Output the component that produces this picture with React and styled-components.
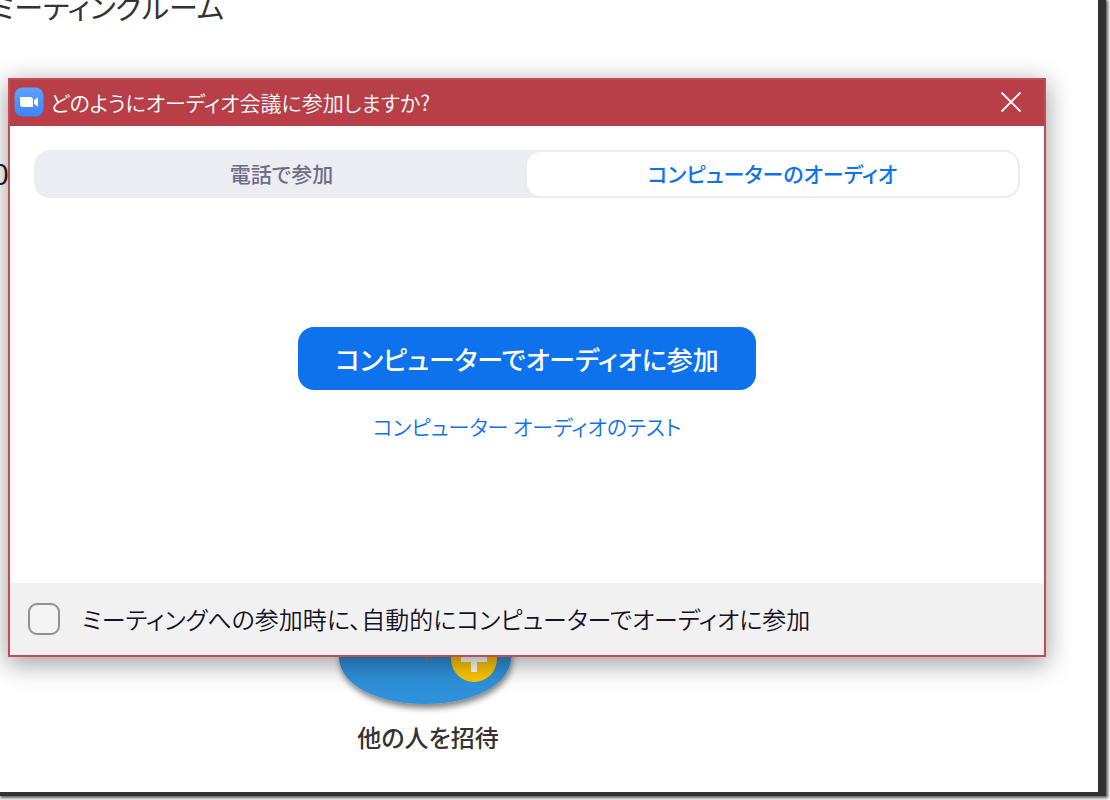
import React, { useState } from 'react'
import styled, { createGlobalStyle } from 'styled-components'

const GlobalStyle = createGlobalStyle`
* { box-sizing: border-box; }
body {
  margin: 0;
  overflow: hidden;
  font-family: "Noto Sans CJK JP", sans-serif;
  font-feature-settings: "palt";
}
button, input {
  font-family: inherit;
  font-feature-settings: inherit;
}
`
const Screen = styled.div`
  position: relative;
  display: flex;
  height: 100vh;
  padding: 0 4px 4px 0;
  overflow: hidden;
  background: #fff;
`
const HomeWindow = styled.main`
  flex: 1;
  display: flex;
  flex-direction: column;
  overflow: hidden;
  background: #fff;
  border-right: 8px solid #323232;
  border-bottom: 4px solid #323232;
  box-shadow: 1px 1px 3px 1px #555;
`
const RoomName = styled.h1`
  display: flex;
  justify-content: flex-end;
  width: 224px;
  height: 24px;
  margin: 0;
  align-items: flex-end;
  white-space: nowrap;
  font-size: 29px;
  font-weight: 400;
  line-height: 36px;
  color: #333;
`
const RoomNumber = styled.p`
  display: flex;
  justify-content: flex-end;
  width: 9px;
  margin: 130px 0 0;
  font-family: "Open Sans", sans-serif;
  font-size: 30px;
  line-height: 40px;
  color: #222;
`
const Invite = styled.div`
  display: flex;
  flex-direction: column;
  align-items: center;
  width: 188px;
  margin: auto 0 35px 334px;
`
const InviteLabel = styled.span`
  font-size: 24px;
  font-weight: 500;
  line-height: 40px;
  color: #333;
`
const Dialog = styled.section`
  position: absolute;
  top: 78px;
  left: 8px;
  right: 64px;
  display: flex;
  flex-direction: column;
  background: #fff;
  border: 2px solid #bf4e56;
  box-shadow: 0 6px 24px 1px rgba(0, 0, 0, 0.38);
`
const TitleBar = styled.header`
  display: flex;
  align-items: center;
  gap: 6px;
  height: 46px;
  padding: 0 20px 2px 4px;
  background: #b83f47;
`
const Title = styled.h2`
  flex: 1;
  margin: 0;
  font-size: 21px;
  font-weight: 350;
  line-height: 32px;
  color: #fff;
`
const CloseButton = styled.button`
  display: flex;
  padding: 0;
  border: 0;
  background: none;
  cursor: pointer;
`
const Tabs = styled.div`
  display: flex;
  height: 48px;
  margin: 24px;
  padding: 2px;
  border-radius: 16px;
  background: #ecedf3;
`
const Tab = styled.button`
  flex: 1;
  padding: 0 0 2px;
  border: 0;
  border-radius: 14px;
  background: ${({ $active }) => ($active ? '#fff' : 'transparent')};
  color: ${({ $active }) => ($active ? '#0e72ed' : '#6e6d88')};
  font-size: 21px;
  font-weight: 500;
  line-height: 32px;
  cursor: pointer;
`
const Content = styled.div`
  display: flex;
  flex-direction: column;
  align-items: center;
  gap: 18px;
  padding: 105px 0 139px;
`
const JoinButton = styled.button`
  width: 458px;
  height: 63px;
  padding: 0;
  border: 0;
  border-radius: 16px;
  background: #0e72ed;
  color: #fff;
  font-size: 26px;
  font-weight: 500;
  line-height: 40px;
  cursor: pointer;
`
const TestLink = styled.a`
  font-size: 21px;
  font-weight: 350;
  line-height: 36px;
  color: #0e72ed;
  text-decoration: none;
`
const Footer = styled.footer`
  display: flex;
  align-items: center;
  height: 72px;
  padding: 0 18px;
  background: #f1f1f1;
`
const AutoJoin = styled.label`
  display: flex;
  align-items: center;
  gap: 22px;
  font-size: 24px;
  font-weight: 350;
  line-height: 36px;
  color: #131325;
  cursor: pointer;
`
const Checkbox = styled.input`
  appearance: none;
  width: 32px;
  height: 32px;
  margin: 0;
  border: 2px solid #909096;
  border-radius: 9px;
  background: ${({ checked }) => (checked ? '#0e72ed' : '#f4f4f4')};
`

function ZoomLogo() {
  return (
    <svg width="30" height="30" viewBox="0 0 30 30" aria-hidden="true">
      <defs>
        <linearGradient id="logo" x1="0" y1="0" x2="0" y2="1">
          <stop offset="0" stopColor="#5ba3fb" />
          <stop offset="1" stopColor="#3d84fa" />
        </linearGradient>
      </defs>
      <rect x="0.5" y="0.5" width="29" height="29" rx="8" fill="url(#logo)" />
      <path d="M6 10h10q3 0 3 3v7H9q-3 0-3-3z" fill="#fff" />
      <path d="M20 13.3l3.2-2.5q.8-.5.8.4v7.6q0 .9-.8.4L20 16.700z" fill="#fff" />
    </svg>
  )
}

function InviteIcon() {
  return (
    <svg width="188" height="84" viewBox="0 0 188 84" aria-hidden="true">
      <defs>
        <filter id="shadow" x="-10%" y="-10%" width="120%" height="130%">
          <feDropShadow dx="1" dy="4" stdDeviation="3" floodOpacity="0.5" />
        </filter>
      </defs>
      <path
        d="M5 0V24C5 53 46 71 91 71S177 53 177 24V0z"
        fill="#2d91da"
        filter="url(#shadow)"
      />
      <path d="M91 18h3l-1.500 11z" fill="#c87e2c" />
      <circle cx="140" cy="26" r="23" fill="#fdc700" />
      <path d="M137 13h6v10h10v6h-10v10h-6v-10h-10v-6h10z" fill="#fff" />
    </svg>
  )
}

function App() {
  const [tab, setTab] = useState('computer')
  const [autoJoin, setAutoJoin] = useState(false)

  return (
    <Screen>
      <GlobalStyle />
      <HomeWindow>
        <RoomName>ルミーティングルーム</RoomName>
        <RoomNumber>0</RoomNumber>
        <Invite>
          <InviteIcon />
          <InviteLabel>他の人を招待</InviteLabel>
        </Invite>
      </HomeWindow>
      <Dialog role="dialog" aria-labelledby="dialog-title">
        <TitleBar>
          <ZoomLogo />
          <Title id="dialog-title">どのようにオーディオ会議に参加しますか?</Title>
          <CloseButton aria-label="閉じる">
            <svg width="26" height="26" viewBox="0 0 26 26" stroke="#fff" strokeWidth="1.800">
              <path d="M3.500 3.500l19 19M22.500 3.500l-19 19" />
            </svg>
          </CloseButton>
        </TitleBar>
        <Tabs role="tablist">
          <Tab role="tab" aria-selected={tab === 'phone'} $active={tab === 'phone'} onClick={() => setTab('phone')}>
            電話で参加
          </Tab>
          <Tab role="tab" aria-selected={tab === 'computer'} $active={tab === 'computer'} onClick={() => setTab('computer')}>
            コンピューターのオーディオ
          </Tab>
        </Tabs>
        <Content>
          <JoinButton>コンピューターでオーディオに参加</JoinButton>
          <TestLink href="#test">コンピューター オーディオのテスト</TestLink>
        </Content>
        <Footer>
          <AutoJoin htmlFor="auto-join">
            <Checkbox
              id="auto-join"
              type="checkbox"
              checked={autoJoin}
              onChange={(e) => setAutoJoin(e.target.checked)}
            />
            ミーティングへの参加時に、自動的にコンピューターでオーディオに参加
          </AutoJoin>
        </Footer>
      </Dialog>
    </Screen>
  )
}

export default App
